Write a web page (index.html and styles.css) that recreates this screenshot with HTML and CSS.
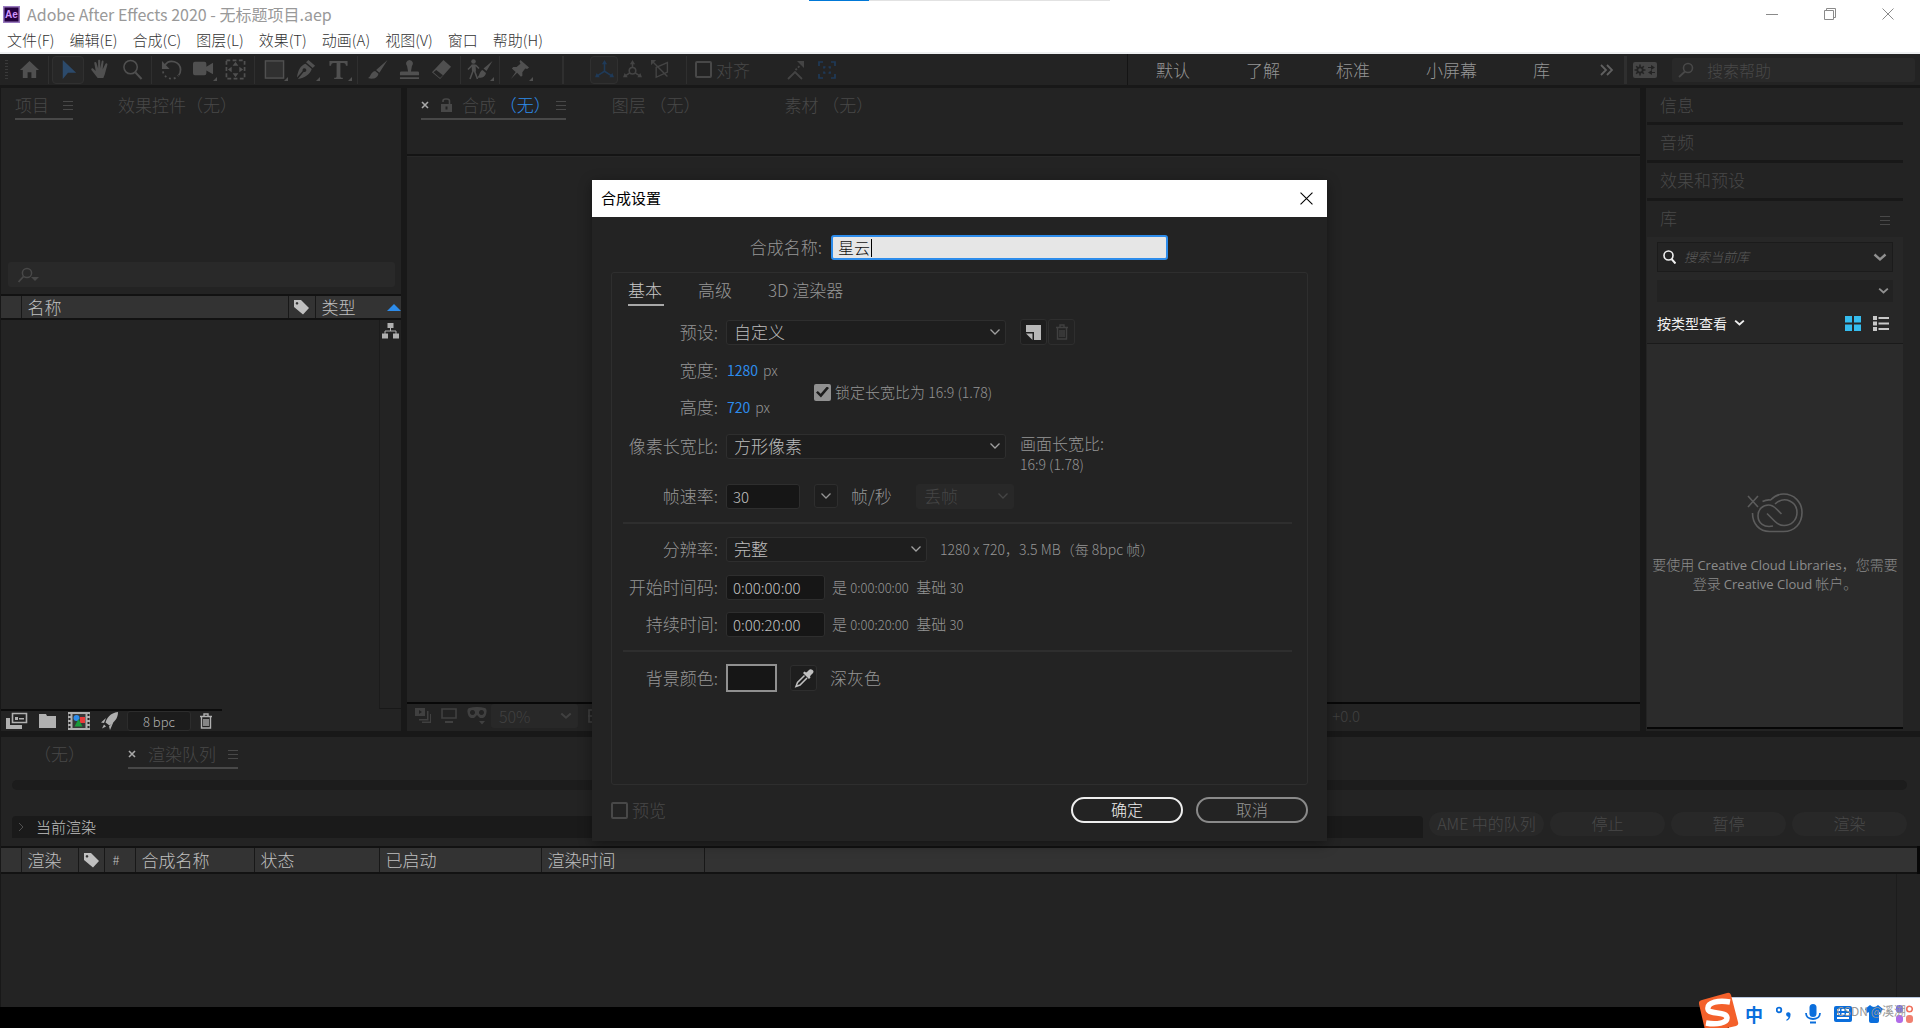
FILE: index.html
```html
<!DOCTYPE html>
<html lang="zh-CN">
<head>
<meta charset="utf-8">
<title>Adobe After Effects 2020 - 无标题项目.aep</title>
<link rel="stylesheet" href="styles.css">
</head>
<body>
<svg class="defs" aria-hidden="true">
  <symbol id="chev" viewBox="0 0 12 8"><path d="M1.5 1.5 6 6l4.500-4.500" fill="none" stroke="currentColor" stroke-width="1.300"/></symbol>
  <symbol id="chev-bold" viewBox="0 0 14 9"><path d="M1.500 1.500 7 6.500l5.500-5" fill="none" stroke="currentColor" stroke-width="2.400"/></symbol>
  <symbol id="burger" viewBox="0 0 10 9"><path d="M0 .5h10M0 4.500h10M0 8.500h10" stroke="currentColor"/></symbol>
  <symbol id="cross" viewBox="0 0 8 8"><path d="m1 1 6 6M7 1 1 7" stroke="currentColor" stroke-width="1.600"/></symbol>
  <symbol id="tag" viewBox="0 0 16 16"><path fill-rule="evenodd" d="M1 1h7l8 8-6 6.500L1 8zM4 3a1.300 1.300 0 1 0 .01 0z" fill="currentColor"/></symbol>
  <symbol id="trash" viewBox="0 0 14 16"><path d="M1 3.500h12M5 3V1h4v2M2.500 4v11h9V4M5 6v7M7 6v7M9 6v7" fill="none" stroke="currentColor" stroke-width="1.400"/></symbol>
  <symbol id="close" viewBox="0 0 12 12"><path d="m.5.5 11 11M11.500.5l-11 11" stroke="currentColor"/></symbol>
  <symbol id="lens" viewBox="0 0 16 16"><circle cx="10" cy="6" r="4.500" fill="none" stroke="currentColor" stroke-width="1.600"/><path d="m7 9.500-6 5.500" stroke="currentColor" stroke-width="1.800"/></symbol>
</svg>

<header class="titlebar">
  <svg class="app-icon" viewBox="0 0 17 17" width="17" height="17"><rect width="17" height="17" fill="#9a7bc0"/><rect x="1.500" y="1.500" width="14" height="14" fill="#24003f"/><text x="8.500" y="12" text-anchor="middle" class="app-icon-text">Ae</text></svg>
  <span class="app-title">Adobe After Effects 2020 - 无标题项目.aep</span>
  <div class="window-buttons">
    <button aria-label="最小化"><svg width="12" height="12" viewBox="0 0 12 12"><path d="M0 6.500h12" stroke="currentColor"/></svg></button>
    <button aria-label="还原"><svg width="12" height="12" viewBox="0 0 12 12" fill="none" stroke="currentColor"><path d="M.5 2.500h9v9h-9zM2.500 2V.5h9v9H10"/></svg></button>
    <button aria-label="关闭"><svg width="12" height="12"><use href="#close"/></svg></button>
  </div>
  <div class="load-bar"><span></span></div>
</header>
<nav class="menubar">
  <button>文件(F)</button><button>编辑(E)</button><button>合成(C)</button><button>图层(L)</button><button>效果(T)</button><button>动画(A)</button><button>视图(V)</button><button>窗口</button><button>帮助(H)</button>
</nav>

<div class="toolbar">
  <span class="grip"></span>
  <button class="tool" aria-label="主页"><svg viewBox="0 0 22 22"><path d="M11 2 1 11.500h3V20h5v-6h4v6h5v-8.500h3z" fill="currentColor"/></svg></button>
  <span class="sep"></span>
  <button class="tool active" aria-label="选取"><svg viewBox="0 0 22 22"><path d="M5 1v20l5.500-6.500H19z" fill="currentColor"/></svg></button>
  <button class="tool" aria-label="手形"><svg viewBox="0 0 22 22"><path d="M8 20 1.500 11.500c-.8-1.500.8-2.500 2-1.300L6 12.500 4.500 4.500c-.2-1.600 1.700-2 2.200-.5l1.800 6V2c0-1.500 2.200-1.500 2.200 0v8l1.500-7.500c.4-1.500 2.200-1 2 .5l-1 8 3-6c.8-1.300 2.400-.5 2 .9L15.500 16 14 20z" fill="currentColor"/></svg></button>
  <button class="tool" aria-label="缩放"><svg viewBox="0 0 22 22" fill="none" stroke="currentColor"><circle cx="9" cy="8.500" r="7" stroke-width="1.600"/><path d="m14 14 6.500 7" stroke-width="2.200"/></svg></button>
  <span class="sep"></span>
  <button class="tool" aria-label="旋转"><svg viewBox="0 0 22 22"><path d="M4 6.500C9-1 20 3 20.500 11c0 3-1 5-2 6" fill="none" stroke="currentColor" stroke-width="1.800"/><path d="M1 2v8.500h8z" fill="currentColor"/><path d="M2 13c1 5 5 7.500 9 7.500s5-1 7-3" fill="none" stroke="currentColor" stroke-width="1.800" stroke-dasharray="2 3"/></svg></button>
  <button class="tool sub" aria-label="摄像机"><svg viewBox="0 0 22 22"><path d="M0 5q0-2 2-2h10q2 0 2 2v3l7-4v12l-7-4v3q0 2-2 2H2q-2 0-2-2z" fill="currentColor"/></svg></button>
  <button class="tool" aria-label="向后平移"><svg viewBox="0 0 22 22"><rect x="1.500" y="1.500" width="19" height="19" fill="none" stroke="currentColor" stroke-width="1.800" stroke-dasharray="4 2.500"/><path d="m11 3 3 4H8zM11 19l3-4H8zM3 11l4-3v6zM19 11l-4-3v6z" fill="currentColor"/></svg></button>
  <span class="sep"></span>
  <button class="tool sub" aria-label="矩形"><svg viewBox="0 0 22 22"><rect x="1.500" y="2" width="19" height="18" fill="#303030" stroke="currentColor" stroke-width="1.500"/></svg></button>
  <button class="tool sub" aria-label="钢笔"><svg viewBox="0 0 22 22"><path d="m13 1 7 6-2.500 2.500-7-6zM10 5l6.500 5.500c-2 6-7 9-14.500 10.500l6-7.500a2 2 0 1 0-1-1L1 19.500C2 12 4.500 7 10 5z" fill="currentColor"/></svg></button>
  <button class="tool sub" aria-label="文字"><svg viewBox="0 0 22 22"><path d="M1.500 2h19v5h-1.700c-.4-2-1-2.700-2.800-2.700h-3V18c0 1.200.6 1.500 2.500 1.700V21h-9v-1.300C8.400 19.500 9 19.200 9 18V4.300H6C4.200 4.300 3.600 5 3.200 7H1.500z" fill="currentColor"/></svg></button>
  <span class="sep"></span>
  <button class="tool" aria-label="画笔"><svg viewBox="0 0 22 22"><path d="M21.500 1 13 14.500 9.500 11.500zM8.500 12.500l3.500 3c-1 5-6 6-11 4.500 3-1 2.500-6.500 7.500-7.500z" fill="currentColor"/></svg></button>
  <button class="tool" aria-label="仿制图章"><svg viewBox="0 0 22 22"><path d="M11 1a3.800 3.800 0 0 0-2.500 6.500L9.500 13H2.500Q1 13 1 14.500V17h20v-2.500Q21 13 19.500 13h-7l1-5.500A3.800 3.800 0 0 0 11 1zM1 19h20v2H1z" fill="currentColor"/></svg></button>
  <button class="tool" aria-label="橡皮擦"><svg viewBox="0 0 22 22"><path d="m13 1 8 7L9.500 21 1 14z" fill="currentColor"/><path d="m5.500 11.500 7 5.500-3 3L2.500 14z" fill="#232323"/></svg></button>
  <span class="sep"></span>
  <button class="tool sub" aria-label="Roto 笔刷"><svg viewBox="0 0 26 22" class="roto"><circle cx="6.500" cy="2.500" r="2.300" fill="currentColor"/><path d="M4.500 5.500h4l.5 7H5z" fill="currentColor"/><path d="M1 10.500 5 6.500h4l3 3M6 12l-3 8M7.500 12l3 8" fill="none" stroke="currentColor" stroke-width="1.600"/><path d="m25.500 2-6 10-3-2.500zM15.500 11l3.500 3c-1 4.500-5 5.500-9 4.500 2.500-1 2.500-6.500 5.500-7.500z" fill="currentColor"/></svg></button>
  <span class="sep"></span>
  <button class="tool sub" aria-label="人偶位控点"><svg viewBox="0 0 22 22"><path d="m12 1 9 8-2 1.500-2-.5-3 4v3.500l-1.500 1-4-4L2 21l5-7.500-4-3.500 1.500-1.500H8l4-3.500-1-2z" fill="currentColor"/></svg></button>
  <span class="sep wide"></span>
  <div class="axes">
    <button class="tool active dim" aria-label="本地轴"><svg viewBox="0 0 22 22"><path d="M11 4v9l-8 5M11 13l8 5" fill="none" stroke="currentColor" stroke-width="1.800"/><path d="m11 0 3 5H8zM0 20l2-5 3.500 5zM22 20l-2-5-3.500 5z" fill="currentColor"/></svg></button>
    <button class="tool" aria-label="世界轴"><svg viewBox="0 0 22 22"><path d="M11 4v5M8 15l-5 3M14 15l5 3" stroke="currentColor" stroke-width="1.800"/><circle cx="11" cy="12.500" r="3.800" fill="none" stroke="currentColor" stroke-width="1.800"/><path d="m11 0 3 5H8zM0 20l2-5 3.500 5zM22 20l-2-5-3.500 5z" fill="currentColor"/></svg></button>
    <button class="tool" aria-label="视图轴"><svg viewBox="0 0 22 22"><path d="M6 8.500 19 3v11L6 20zM2 2l17 17" fill="none" stroke="currentColor" stroke-width="1.600"/><path d="M0 0h6L0 6z" fill="currentColor"/></svg></button>
  </div>
  <span class="sep"></span>
  <label class="snap"><input type="checkbox" class="box">对齐</label>
  <div class="snap-tools">
    <svg width="18" height="20" viewBox="0 0 18 20"><path d="m1 19 7-7 7 7" fill="none" stroke="currentColor" stroke-width="1.800"/><path d="m8.500 10 5-5" fill="none" stroke="currentColor" stroke-width="1.800" stroke-dasharray="2 1.500"/><path d="M10 1h7v7z" fill="currentColor"/></svg>
    <svg class="blue" width="18" height="18" viewBox="0 0 18 18" fill="none" stroke="currentColor" stroke-width="1.700"><path d="M1 5V1h4M13 1h4v4M17 13v4h-4M5 17H1v-4M6 7.500V6h1.500M10.500 6H12v1.500M12 10.500V12h-1.500M7.500 12H6v-1.500"/></svg>
  </div>
  <nav class="spaces">
    <button>默认</button><button>了解</button><button>标准</button><button>小屏幕</button><button>库</button>
  </nav>
  <svg class="more" width="14" height="12" viewBox="0 0 14 12"><path d="m1 1 5 5-5 5M7 1l5 5-5 5" fill="none" stroke="currentColor" stroke-width="1.800"/></svg>
  <span class="sep thick"></span>
  <svg class="sync" width="24" height="16" viewBox="0 0 24 16"><rect width="24" height="16" rx="2" fill="#454545"/><path d="M7 2.500v11M1.500 8h11M3.200 4.200l7.600 7.600M10.800 4.200l-7.600 7.600" stroke="#232323" stroke-width="1.600"/><circle cx="7" cy="8" r="3.600" fill="#232323"/><circle cx="7" cy="8" r="1.800" fill="#454545"/><path d="M15 5h3V3l4 2.500L18 8V6h-3zM22 10h-3V8l-4 2.500 4 2.500v-2h3z" fill="#232323"/></svg>
  <label class="help-search"><svg width="16" height="16"><use href="#lens"/></svg><input type="text" placeholder="搜索帮助" aria-label="搜索帮助"></label>
</div>

<main class="workspace">
  <section class="panel project">
    <div class="tabs">
      <div class="tab current"><span>项目</span><svg class="burger"><use href="#burger"/></svg></div>
      <div class="tab effect-tab">效果控件（无）</div>
    </div>
    <label class="project-search"><svg width="22" height="16" viewBox="0 0 22 16"><circle cx="9" cy="6" r="4.600" fill="none" stroke="currentColor" stroke-width="1.500"/><path d="m5.500 9.500-5 5.500" stroke="currentColor" stroke-width="1.800"/><path d="M13 10h8l-4 4z" fill="currentColor"/></svg><input type="text" aria-label="搜索项目"></label>
    <table class="list project-list">
      <colgroup><col class="c-lead"><col><col class="c-tag"><col class="c-type"></colgroup>
      <thead><tr><th></th><th>名称</th><th class="tag-cell"><svg width="16" height="16"><use href="#tag"/></svg></th><th><div class="type-head">类型<svg width="14" height="7" viewBox="0 0 14 7"><path d="M7 0l7 7H0z" fill="#2d8ceb"/></svg></div></th></tr></thead>
    </table>
    <div class="project-body"><div class="side"><svg width="17" height="16" viewBox="0 0 17 16"><path d="M5.500 0h6v5h-6zM0 10.500h6v5H0zM11 10.500h6v5h-6z" fill="#b0b0b0"/><path d="M8.500 5v3M3 11V8h11v3" fill="none" stroke="#b0b0b0"/></svg></div></div>
    <div class="project-foot">
      <button aria-label="解释素材"><svg width="22" height="18" viewBox="0 0 22 18"><path d="M6.500 1.500h14v9h-14z" fill="#232323" stroke="currentColor" stroke-width="1.600"/><path d="M0 6h4v7h12v4H0zM9 5h3v3H9zM13 6h5v1.500h-5z" fill="currentColor"/></svg></button>
      <button aria-label="新建文件夹"><svg width="18" height="16" viewBox="0 0 18 16"><path d="M0 1h7l1 2h9v12H0z" fill="currentColor"/></svg></button>
      <button aria-label="新建合成"><svg width="22" height="18" viewBox="0 0 22 18"><path d="M0 0h22v18H0z" fill="currentColor"/><path d="M4.500 2h13v14h-13z" fill="#383838"/><path d="M1.500 2v15M20.500 2v15" stroke="#222" stroke-width="2" stroke-dasharray="2 2"/><circle cx="8.500" cy="6" r="3" fill="#2d8ceb"/><path d="M12 5h5v6h-5z" fill="#e83b3b"/><path d="m10.500 7 4 7.500h-8z" fill="#1a9c3b"/></svg></button>
      <button aria-label="项目设置"><svg width="18" height="18" viewBox="0 0 18 18"><path d="M17 0C9 1 6 6 4.500 10.500l4 3C13 10 17 7 17 0zM5 6 0 10.500l3 .5zM12.500 10 8 14.500l1 3.500zM3 12.500l2 2-4 2z" fill="currentColor"/></svg></button>
      <button class="bpc">8 bpc</button>
      <button aria-label="删除"><svg width="14" height="16"><use href="#trash"/></svg></button>
    </div>
  </section>

  <section class="panel viewer">
    <div class="tabs">
      <div class="tab current"><svg class="x"><use href="#cross"/></svg><svg class="lock" width="11" height="14" viewBox="0 0 11 14"><path d="M0 6h11v8H0z" fill="currentColor"/><path d="M2 4V3Q2 1 4.500 1H6q2.500 0 2.500 2v3" fill="none" stroke="currentColor" stroke-width="1.600"/><path d="M5.500 8.500v3" stroke="#232323" stroke-width="2"/></svg><span>合成 <a href="#comp">（无）</a></span><svg class="burger"><use href="#burger"/></svg></div>
      <div class="tab">图层 （无）</div>
      <div class="tab footage">素材 （无）</div>
    </div>
    <div class="canvas"></div>
    <div class="viewer-foot">
      <svg width="16" height="16" viewBox="0 0 16 16"><path d="M0 0h10v8H0zM12 3v8H4v1.500h9.500V3zM15 6v7.500H7V15h9V6z" fill="currentColor"/><path d="M4 2v4l3-2z" fill="#232323"/></svg>
      <svg width="16" height="16" viewBox="0 0 16 16"><path d="M1 1h14v9H1z" fill="none" stroke="currentColor" stroke-width="1.600"/><path d="M4 13h8v2H4z" fill="currentColor"/></svg>
      <svg width="20" height="18" viewBox="0 0 20 18"><path fill-rule="evenodd" d="M2 1q8-2 16 0 2 1 1.500 4-.5 5-3.500 6H13l-3-3-3 3H4Q1 10 .5 5 0 2 2 1zM5.500 3a2.500 2.500 0 1 0 .01 0zM14.500 3a2.500 2.500 0 1 0 .01 0zM12 14h6l-3 3.500z" fill="currentColor"/></svg>
      <button class="zoom">50%<svg width="12" height="8"><use href="#chev-bold"/></svg></button>
      <svg width="14" height="14" viewBox="0 0 14 14"><path d="M5 1H1v12h4M9 1h4v12H9M0 7h4M10 7h4" fill="none" stroke="currentColor" stroke-width="1.600"/></svg>
      <span class="exposure">+0.0</span>
    </div>
  </section>

  <aside class="panel side-panels">
    <h2>信息</h2><h2>音频</h2><h2>效果和预设</h2>
    <h2 class="open">库<svg class="burger"><use href="#burger"/></svg></h2>
    <div class="library">
      <label class="lib-search"><svg width="13" height="14" viewBox="0 0 13 14"><circle cx="5.500" cy="5.500" r="4.500" fill="none" stroke="#f0f0f0" stroke-width="1.600"/><path d="m8.500 9 4 4.500" stroke="#f0f0f0" stroke-width="2"/></svg><input type="text" placeholder="搜索当前库" aria-label="搜索当前库"><svg width="14" height="9"><use href="#chev-bold"/></svg></label>
      <button class="lib-pick" aria-label="选择库"><svg width="11" height="8"><use href="#chev-bold"/></svg></button>
      <div class="lib-view">
        <button>按类型查看<svg width="11" height="8"><use href="#chev-bold"/></svg></button>
        <svg width="16" height="15" viewBox="0 0 16 15"><path d="M0 0h7v6.500H0zM9 0h7v6.500H9zM0 8.500h7V15H0zM9 8.500h7V15H9z" fill="#35bcee"/></svg>
        <svg width="16" height="15" viewBox="0 0 16 15"><path d="M0 0h4v4H0zM0 5.500h4v4H0zM0 11h4v4H0zM5.500 1H16v2H5.500zM5.500 6.500H16v2H5.500zM5.500 12H16v2H5.500z" fill="#c8c8c8"/></svg>
      </div>
      <div class="lib-empty">
        <svg width="56" height="40" viewBox="0 0 56 40" fill="none" stroke="#5c5c5c" stroke-width="1.600"><path d="m1 3 10 11M11 3 1 14"/><path d="M5.500 20c0 11 7 18.500 17 18.500h14C48 38.500 55 30 55 19.500S47 1 36.500 1c-6 0-9 2-13 6-3-.5-5 0-8 1.500"/><path d="M26 33c-9 2-15-3-15-10s5-11 10.500-11c3.500 0 5 1 8 4l5 5M28 11c10-9 22-2 22 8.500 0 8-6 13-13 13-4 0-6-1-9-4l-8-8"/></svg>
        <p>要使用 <span>Creative Cloud Libraries</span>，您需要<br>登录 <span>Creative Cloud</span> 帐户。</p>
      </div>
    </div>
  </aside>
</main>

<section class="queue">
  <div class="tabs">
    <div class="tab none">（无）</div>
    <div class="tab current"><svg class="x"><use href="#cross"/></svg><span>渲染队列</span><svg class="burger"><use href="#burger"/></svg></div>
  </div>
  <div class="progress"></div>
  <div class="queue-bar">
    <div class="now"><svg width="6" height="10" viewBox="0 0 6 10"><path d="m1 1 4 4-4 4" fill="none" stroke="#505050"/></svg>当前渲染</div>
    <button disabled>AME 中的队列</button><button disabled>停止</button><button disabled>暂停</button><button disabled>渲染</button>
  </div>
  <table class="list queue-list">
    <colgroup><col class="q0"><col class="q1"><col class="q2"><col class="q3"><col class="q4"><col class="q5"><col class="q6"><col class="q7"><col></colgroup>
    <thead><tr><th></th><th>渲染</th><th class="tag-cell"><svg width="16" height="16"><use href="#tag"/></svg></th><th class="num">#</th><th>合成名称</th><th>状态</th><th>已启动</th><th>渲染时间</th><th></th></tr></thead>
  </table>
  <div class="queue-body"></div>
</section>

<div class="dialog" role="dialog" aria-labelledby="dlg-title">
  <div class="dialog-title"><span id="dlg-title">合成设置</span><button aria-label="关闭"><svg width="13" height="13"><use href="#close"/></svg></button></div>
  <form class="dialog-body">
    <div class="name-row"><label for="comp-name">合成名称:</label><div class="name-field"><input id="comp-name" type="text" value="星云"><i class="caret"></i></div></div>
    <div class="settings">
      <div class="dlg-tabs" role="tablist"><button type="button" role="tab" class="on">基本</button><button type="button" role="tab">高级</button><button type="button" role="tab">3D 渲染器</button></div>
      <div class="row preset"><label for="preset">预设:</label>
        <div class="select w-full"><select id="preset"><option>自定义</option></select><svg><use href="#chev"/></svg></div>
        <div class="pair"><button type="button" aria-label="保存预设"><svg width="17" height="17" viewBox="0 0 17 17"><path d="M1 1h15v15H9V8H1z" fill="#b8b8b8"/><path d="m1 9.500 6.500 0V16z" fill="#b8b8b8"/></svg></button><button type="button" disabled aria-label="删除预设"><svg width="14" height="16"><use href="#trash"/></svg></button></div>
      </div>
      <div class="size">
        <div class="size-rows">
          <div class="row"><span class="lab">宽度:</span><button type="button" class="hot">1280</button><span class="unit">px</span></div>
          <div class="row"><span class="lab">高度:</span><button type="button" class="hot">720</button><span class="unit">px</span></div>
        </div>
        <label class="lock-ratio"><input type="checkbox" class="box" checked><span>锁定长宽比为 <small>16:9 (1.78)</small></span></label>
      </div>
      <div class="row pixel"><label for="par">像素长宽比:</label>
        <div class="select w-full"><select id="par"><option>方形像素</option></select><svg><use href="#chev"/></svg></div>
        <p class="frame-ratio">画面长宽比:<br><small>16:9 (1.78)</small></p>
      </div>
      <div class="row rate"><label for="fps">帧速率:</label><input id="fps" class="field w-fps" type="text" value="30"><button type="button" class="drop" aria-label="帧速率列表"><svg><use href="#chev"/></svg></button><span class="per">帧/秒</span>
        <div class="select off w-drop"><select disabled aria-label="丢帧"><option>丢帧</option></select><svg><use href="#chev"/></svg></div>
      </div>
      <hr>
      <div class="row res"><label for="res">分辨率:</label><div class="select w-res"><select id="res"><option>完整</option></select><svg><use href="#chev"/></svg></div><span class="note">1280 x 720，3.5 MB（每 8bpc 帧）</span></div>
      <div class="row start"><label for="start">开始时间码:</label><input id="start" class="field w-time" type="text" value="0:00:00:00"><span class="note tc">是 <small>0:00:00:00</small>&ensp;基础 <small>30</small></span></div>
      <div class="row dur"><label for="dur">持续时间:</label><input id="dur" class="field w-time" type="text" value="0:00:20:00"><span class="note tc">是 <small>0:00:20:00</small>&ensp;基础 <small>30</small></span></div>
      <hr>
      <div class="row color"><label for="bg">背景颜色:</label><button type="button" id="bg" class="swatch" aria-label="背景颜色"></button><button type="button" class="dropper" aria-label="吸管"><svg width="20" height="20" viewBox="0 0 20 20"><path d="M12 4.500q1-.5 2-1.500 2-3 4.500-1t-1 4.500q-1 1-1.500 2l.5 1-1.500 1.500-6-6L10.500 3.500z" fill="#c0c0c0"/><path d="m10.500 7.500-7 7-1.500 4 4-1.500 7-7" fill="none" stroke="#c0c0c0" stroke-width="1.500"/></svg></button><span class="color-name">深灰色</span></div>
    </div>
    <div class="actions"><label class="preview"><input type="checkbox" class="box" disabled>预览</label><button type="button" class="ok">确定</button><button type="button" class="cancel">取消</button></div>
  </form>
</div>

<div class="ime">
  <svg class="ime-logo" width="40" height="38" viewBox="0 0 40 38"><path d="M3 8 28 1q3-1 4 2l7 27q1 3-2 4L10 40q-3 1-4-2L0 12q-1-3 3-4z" fill="#f4602a"/><path d="M31 10C20 8 8 10 9 17c1 6 19 2 19 9 0 5-10 7-21 5" fill="none" stroke="#fff" stroke-width="5.500"/></svg>
  <div class="ime-bar">
    <b>中</b>
    <svg width="16" height="18" viewBox="0 0 16 18"><circle cx="3" cy="5" r="2.300" fill="none" stroke="currentColor" stroke-width="1.800"/><path d="M10 9a2.300 2.300 0 1 1 4.500 1q0 4-4 6v-1.500q2-1 2-2.500-2.500-.5-2.500-3z" fill="currentColor"/></svg>
    <svg width="16" height="20" viewBox="0 0 16 20"><rect x="4.500" y="0" width="7" height="13" rx="3.500" fill="currentColor"/><path d="M1 9c0 8 14 8 14 0M5 18.500h6" fill="none" stroke="currentColor" stroke-width="1.800"/></svg>
    <svg width="18" height="16" viewBox="0 0 18 16"><rect width="18" height="16" rx="2" fill="currentColor"/><path d="M3 4h3M7.500 4h3M12 4h3M3 8h3M7.500 8h3M12 8h3M3 12h12" stroke="#fff" stroke-width="2"/></svg>
    <svg width="18" height="18" viewBox="0 0 18 18"><path d="M5 0q4 4 8 0l5 4-2.500 4L14 7v9q0 2-2 2H6q-2 0-2-2V7l-1.500 1L0 4z" fill="currentColor"/></svg>
    <svg width="17" height="18" viewBox="0 0 17 18"><rect width="7" height="8" rx="3" fill="#7a6cf0"/><rect y="10" width="7" height="8" rx="3" fill="#b06ce8"/><rect x="10" y="10" width="7" height="8" rx="3" fill="#f08070"/><circle cx="13.500" cy="4" r="2.800" fill="none" stroke="#f0705c" stroke-width="1.600"/></svg>
  </div>
  <span class="mark">CSDN @溪溯</span>
</div>
</body>
</html>
```
FILE: styles.css
```css
* { box-sizing: border-box; }
:root {
  --bg: #232323;
  --gap: #181818;
  --faint: #484848;
  --text: #959595;
  --line: #2e2e2e;
  --blue: #2d8ceb;
}
body {
  margin: 0;
  min-height: 100vh;
  display: flex;
  flex-direction: column;
  position: relative;
  overflow-x: hidden;
  background: #000;
  color: var(--faint);
  font: 300 17px/24px "Noto Sans CJK SC", sans-serif;
}
button, input, select { font: inherit; color: inherit; margin: 0; padding: 0; border: 0; background: none; }
button { display: flex; align-items: center; justify-content: center; }
svg { display: block; flex: none; }
input { min-width: 0; outline: 0; }
h2, p { margin: 0; font-weight: inherit; font-size: inherit; }
small { font-size: 13px; }
.defs { position: absolute; width: 0; height: 0; }

/* window frame */
.titlebar { height: 28px; background: #fff; display: flex; align-items: center; padding: 0 3px; position: relative; }
.app-icon-text { font: 700 10px "Liberation Sans", sans-serif; fill: #cf96fd; }
.app-title { margin-left: 7px; flex: 1; color: #999; font-size: 16px; font-weight: 400; }
.window-buttons { display: flex; color: #8a8a8a; }
.window-buttons button { width: 58px; height: 28px; }
.load-bar { position: absolute; top: 0; left: 809px; width: 301px; height: 1px; background: #e2e2e2; }
.load-bar span { display: block; width: 60px; height: 1px; background: #0078d7; }
.menubar { height: 26px; background: #fff; border-bottom: 2px solid #eef0f2; display: flex; gap: 15px; padding-left: 7px; color: #333; font-size: 15px; }

/* toolbar */
.toolbar { height: 31px; background: var(--bg); display: flex; align-items: center; padding: 0 5px; }
.grip { width: 3px; height: 20px; margin-right: 5px; background: repeating-linear-gradient(#3a3a3a 0 1px, transparent 1px 3px); }
.tool { width: 32px; height: 28px; position: relative; color: #505050; border: 1px solid transparent; border-radius: 4px; }
.tool svg { width: 21px; height: 21px; }
.tool svg.roto { width: 26px; height: 22px; }
.tool.active { color: #2c4a6b; background: #272727; border-color: #303030; }
.axes .tool.dim { color: #1f3a58; }
.tool.sub::after { content: ""; position: absolute; right: 1px; bottom: 2px; border: 2px solid #505050; border-top-color: transparent; border-left-color: transparent; }
.sep { width: 7px; height: 28px; background: linear-gradient(#2f2f2f, #2f2f2f) center / 1px 100% no-repeat; }
.sep.wide { width: 55px; background-size: 2px 100%; }
.axes { display: flex; padding-right: 9px; }
.axes .tool { width: 28px; color: #444; }
.axes .tool svg { width: 19px; height: 19px; }
.box { appearance: none; width: 17px; height: 17px; border: 2px solid currentColor; border-radius: 2px; flex: none; display: grid; place-items: center; }
.snap { display: flex; align-items: center; gap: 4px; margin-left: 5px; }
.snap-tools { display: flex; align-items: center; gap: 13px; margin-left: 37px; flex: 1; color: #444; }
.snap-tools .blue { color: #1f3a58; }
.spaces { display: flex; gap: 56px; padding: 0 50px 0 28px; height: 31px; border-left: 1px solid #141414; color: var(--text); }
.more { color: #606060; margin-right: 8px; }
.sep.thick { background-size: 3px 100%; }
.sync { margin: 0 15px 0 4px; }
.help-search { width: 243px; height: 24px; background: #292929; border-radius: 3px; display: flex; align-items: center; gap: 13px; padding: 0 6px; }
.help-search input, .lib-search input, .project-search input { flex: 1; }
.help-search input { font-size: 16px; }
::placeholder { color: inherit; opacity: 1; }

/* panels */
.workspace { flex: 1; display: grid; grid-template-columns: 400px minmax(0, 1fr) 274px; gap: 6px; padding: 3px 0 6px 1px; background: var(--gap); }
.panel { background: var(--bg); display: flex; flex-direction: column; min-width: 0; }
.tabs { display: flex; align-items: flex-start; height: 33px; padding-top: 5px; }
.tab { height: 27px; display: flex; align-items: center; padding-bottom: 3px; white-space: pre; }
.tab.current { border-bottom: 2px solid var(--faint); padding-bottom: 1px; }
.burger { width: 10px; height: 9px; color: var(--faint); }
.x { width: 8px; height: 8px; color: #a8a8a8; }
.tab a { color: var(--blue); text-decoration: none; }

.project .tabs { padding-left: 14px; gap: 45px; height: 174px; }
.project .current { gap: 14px; }
.project-search { margin: 0 6px 7px 7px; height: 25px; background: #292929; border-radius: 3px; display: flex; align-items: center; padding-left: 10px; }
.list { border-collapse: collapse; table-layout: fixed; width: 100%; color: #c0c0c0; background: #333; }
.list th { font-weight: 300; text-align: left; padding: 0 0 0 6px; height: 24px; line-height: 22px; border-left: 1px solid var(--gap); border-top: 2px solid #121212; border-bottom: 2px solid #121212; }
.list th:first-child { border-left: 0; }
.list .tag-cell { padding-left: 4px; }
.c-lead { width: 20px; } .c-tag { width: 27px; } .c-type { width: 86px; }
.type-head { display: flex; align-items: center; justify-content: space-between; }
.project-body { flex: 1; display: flex; justify-content: flex-end; }
.side { width: 22px; border-left: 1px solid #1b1b1b; border-bottom: 1px solid #181818; padding: 3px 0 0 2px; }
.project-foot { height: 22px; width: 221px; border-top: 2px solid #0c0c0c; display: flex; color: #b0b0b0; }
.project-foot button { width: 31px; height: 20px; }
.project-foot .bpc { width: 64px; margin: 0 5px 0 2px; background: #1c1c1c; border: 1px solid #2c2c2c; border-radius: 3px; font-size: 13px; padding-top: 2px; }
.project-foot button:last-child { width: 20px; }

.viewer .tabs { padding-left: 14px; height: 68px; border-bottom: 2px solid #141414; gap: 46px; }
.viewer .current svg.lock { margin: 0 10px 0 12px; }
.viewer .current .burger { margin-left: 5px; }
.footage { margin-left: 38px; }
.canvas { flex: 1; border-top: 1px solid #282828; border-bottom: 2px solid #080808; }
.viewer-foot { height: 27px; display: flex; align-items: center; gap: 10px; padding: 0 0 3px 8px; color: #404040; }
.zoom { width: 87px; height: 24px; justify-content: space-between; padding: 0 6px 0 8px; background: #282828; font-size: 16px; margin-left: -6px; border-radius: 3px; }
.exposure { margin-left: auto; padding-right: 280px; font-size: 15px; }

.side-panels { padding: 0 17px 2px 1px; }
.side-panels h2 { height: 38px; padding: 5px 13px 0; border-bottom: 3px solid var(--gap); }
.side-panels h2:first-child { height: 37px; }
.side-panels .open { display: flex; justify-content: space-between; height: 36px; border: 0; }
.open .burger { margin-top: 10px; }
.library { flex: 1; display: flex; flex-direction: column; background: #272727; border-bottom: 2px solid #060606; }
.lib-search { margin: 5px 10px 8px; height: 30px; border: 1px solid #1b1b1b; background: #232323; display: flex; align-items: center; padding: 0 5px; gap: 8px; color: #909090; }
.lib-search input { color: #5a5a5a; font-size: 13px; font-style: italic; }
.lib-pick { margin: 0 10px; height: 22px; background: #222; justify-content: flex-end; padding-right: 4px; color: #909090; }
.lib-view { height: 42px; display: flex; align-items: center; gap: 12px; padding: 1px 14px 0 10px; border-bottom: 1px solid #1a1a1a; }
.lib-view button { gap: 7px; margin-right: auto; color: #f0f0f0; font-size: 14px; font-weight: 400; }
.lib-empty { flex: 1; background: #2b2b2b; padding-top: 149px; text-align: center; color: #8c8c8c; }
.lib-empty svg { margin: 0 auto 22px; }
.lib-empty p { font-size: 14px; line-height: 18px; white-space: nowrap; }
.lib-empty p span { font: 400 13px/18px "Open Sans", sans-serif; }

/* render queue */
.queue { background: var(--bg); border-left: 1px solid var(--gap); margin-bottom: 21px; }
.queue .tabs { padding-left: 33px; gap: 43px; height: 43px; }
.queue .current { gap: 12px; }
.progress { height: 10px; margin: 0 13px 22px 11px; background: #1c1c1c; border-radius: 5px; }
.queue-bar { display: flex; gap: 6px; padding: 0 13px 8px 11px; height: 34px; }
.now { flex: 1; height: 22px; margin-top: 4px; background: #1a1a1a; border-radius: 4px 4px 0 0; display: flex; align-items: center; gap: 12px; padding-left: 6px; color: #c0c0c0; font-size: 15px; }
.queue-bar button { width: 115px; height: 24px; border-radius: 12px; background: #282828; font-size: 16px; padding-bottom: 2px; }
.queue-list { border-right: 3px solid #080808; }
.queue-list th { height: 26px; line-height: 22px; }
.q0 { width: 20px; } .q1 { width: 57px; } .q2 { width: 26px; } .q3 { width: 31px; } .q4 { width: 119px; } .q5 { width: 125px; } .q6 { width: 162px; } .q7 { width: 163px; }
.list .num { font-size: 13px; padding-left: 8px; }
.queue-body { height: 133px; margin-right: 3px; }
.queue-body::before { content: ""; display: block; height: 124px; margin-right: 20px; border-right: 1px solid #1c1c1c; }

/* composition settings */
.dialog { position: absolute; top: 180px; left: 50%; width: 735px; margin-left: -368px; background: var(--bg); color: var(--text); box-shadow: 0 3px 12px #0006; }
.dialog-title { height: 37px; background: #fff; color: #000; display: flex; align-items: center; justify-content: space-between; padding: 0 14px 0 9px; font-size: 15px; font-weight: 400; }
.dialog-title span { padding-bottom: 2px; }
.dialog-body { padding: 18px 19px; }
.name-row { display: flex; align-items: center; justify-content: flex-end; gap: 9px; padding-right: 140px; }
.name-row label { padding-bottom: 1px; }
.name-field { display: grid; width: 337px; }
.name-field > * { grid-area: 1 / 1; }
.name-field input { height: 25px; border: 2px solid var(--blue); border-radius: 3px; background: #e6e6e6; color: #111; padding: 0 4px 1px 5px; font-size: 16px; }
.caret { width: 1px; height: 18px; background: #000; margin-left: 40px; align-self: center; }
.settings { margin-top: 12px; height: 513px; border: 1px solid var(--line); border-radius: 3px; padding: 5px 15px 0 13px; }
.dlg-tabs { display: flex; gap: 34px; padding-left: 3px; margin-bottom: 13px; }
.dlg-tabs button { height: 28px; border-bottom: 2px solid transparent; padding-bottom: 2px; padding-right: 2px; }
.dlg-tabs .on { color: #c8c8c8; border-color: #a8a8a8; }
.row { display: flex; align-items: center; height: 26px; margin-bottom: 12px; }
.row > label, .lab { width: 93px; margin-right: 8px; text-align: right; flex: none; white-space: nowrap; }
.select { display: grid; height: 25px; }
.select > * { grid-area: 1 / 1; }
.select select { appearance: none; width: 100%; height: 25px; line-height: 22px; padding-left: 7px; border: 1px solid var(--line); border-radius: 3px; background: #1e1e1e; color: #bcbcbc; opacity: 1; }
.select svg { width: 12px; height: 8px; place-self: center end; margin-right: 5px; pointer-events: none; color: #a0a0a0; }
.select.off select { background: #282828; color: #454545; border-color: #282828; }
.select.off svg { color: #454545; }
.w-full { width: 280px; } .w-res { width: 201px; } .w-drop { width: 98px; }
.pair { display: flex; gap: 1px; margin-left: 14px; }
.pair button, .dropper { width: 27px; height: 26px; border: 1px solid var(--line); border-radius: 3px; background: #1e1e1e; }
.pair button:disabled { background: none; color: #404040; }
.size { display: flex; align-items: center; }
.size-rows { width: 189px; }
.size .row { height: 25px; }
.hot { color: var(--blue); font-size: 14px; font-weight: 400; padding-left: 1px; }
.unit { font-size: 14px; margin-left: 5px; }
.lock-ratio { display: flex; align-items: center; gap: 4px; margin-bottom: 4px; font-size: 15px; }
.lock-ratio small, .frame-ratio small { font-size: 14px; }
.lock-ratio .box { background: #909090; border: 0; }
.box:checked::before { content: ""; width: 13px; height: 11px; background: #1c1c1c; clip-path: polygon(0 55%, 14% 40%, 36% 66%, 84% 0, 100% 14%, 38% 100%); }
.frame-ratio { margin-left: 14px; font-size: 16px; line-height: 20px; padding-top: 14px; }
.size { padding-bottom: 2px; }
.pixel { margin-bottom: 24px; }
.field { height: 25px; border: 1px solid var(--line); border-radius: 3px; background: #161616; color: #c0c0c0; padding-left: 6px; font-size: 15px; }
.w-fps { width: 74px; } .w-time { width: 99px; }
.drop { width: 24px; height: 24px; margin: 0 13px 0 14px; border: 1px solid var(--line); border-radius: 3px; background: #1e1e1e; }
.drop svg { width: 12px; height: 8px; }
.per { width: 65px; }
.rate { margin-bottom: 0; }
hr { height: 2px; margin: 13px 0 12px -2px; border: 0; background: var(--line); }
.note { margin-left: 13px; font-size: 14px; white-space: pre; }
.note.tc { margin-left: 7px; font-size: 15px; }
.start { margin-bottom: 11px; }
.dur { margin-bottom: 0; }
.color { height: 28px; }
.swatch { width: 51px; height: 28px; border: 2px solid #909090; background: #161616; }
.dropper { margin: 0 13px; }
.actions { display: flex; gap: 13px; padding-top: 12px; }
.preview { display: flex; align-items: center; gap: 4px; margin-right: auto; color: var(--faint); }
.ok, .cancel { width: 112px; height: 26px; border: 2px solid #8a8a8a; border-radius: 13px; font-size: 16px; padding-bottom: 2px; }
.ok { border-color: #eee; color: #eee; }

/* input method bar */
.ime { position: absolute; right: 0; bottom: 0; width: 221px; height: 36px; overflow: hidden; }
.ime-logo { position: absolute; left: 0; top: 0; z-index: 1; }
.ime-bar { height: 31px; margin: 5px 0 0 30px; padding: 1px 7px 0 16px; background: #fff; border-top: 1px solid #b8c8e0; display: flex; align-items: center; justify-content: space-between; color: #0a6edc; }
.ime-bar b { font-size: 18px; font-weight: 700; }
.mark { position: absolute; right: 14px; top: 10px; font: 400 12px/18px "Noto Sans CJK SC", sans-serif; color: #999; white-space: nowrap; }
```
